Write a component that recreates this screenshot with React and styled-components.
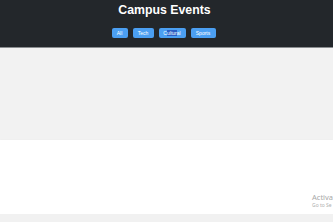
import React from "react";
import styled, { createGlobalStyle } from "styled-components";

const Global = createGlobalStyle`
  html, body { margin: 0; padding: 0; }
  body {
    background: #f1f1f1;
    font-family: "Liberation Sans", Arial, sans-serif;
    width: 333px;
    height: 222px;
    overflow: hidden;
  }
`;

const Page = styled.div`
  display: flex;
  flex-direction: column;
  height: 222px;
  position: relative;
  overflow: hidden;
`;

const Header = styled.header`
  background: #23272b;
  height: 47px;
  border-bottom: 1px solid #8a8d90;
  display: flex;
  flex-direction: column;
  align-items: center;
  box-sizing: content-box;
`;

const Title = styled.h1`
  margin: 3px 0 0 -4px;
  color: #ffffff;
  font-size: 12.3px;
  font-weight: bold;
  line-height: 15px;
`;

const Filters = styled.nav`
  display: flex;
  gap: 5px;
  margin-top: 10px;
  margin-left: -6px;
`;

const FilterButton = styled.button`
  background: #4b9ff2;
  color: #ffffff;
  border: none;
  border-radius: 2px;
  height: 10px;
  width: ${(p) => p.$w}px;
  padding: 0;
  font-family: "Liberation Sans", Arial, sans-serif;
  font-size: 5px;
  line-height: 10px;
  text-align: center;
  white-space: nowrap;
`;

const Selected = styled.span`
  background: #2a5fc4;
  color: #ffffff;
`;

const Hero = styled.section`
  background: #f2f2f2;
  height: 92px;
`;

const Content = styled.section`
  background: #ffffff;
  height: 74px;
  box-shadow: 0 1px 2px rgba(0, 0, 0, 0.12);
`;

const Footer = styled.div`
  flex: 1;
  background: #f1f1f1;
`;

const Watermark = styled.div`
  position: absolute;
  right: 0;
  top: 193px;
  width: 21px;
  color: #a8a8a8;
  white-space: nowrap;
  font-family: "Noto Sans", "Liberation Sans", sans-serif;
`;

const WmTitle = styled.div`
  font-size: 7.5px;
  line-height: 9px;
`;

const WmSub = styled.div`
  font-size: 5px;
  line-height: 6px;
  color: #b0b0b0;
`;

export default function App() {
  return (
    <>
      <Global />
      <Page>
        <Header>
          <Title>Campus Events</Title>
          <Filters>
            <FilterButton $w={16}>All</FilterButton>
            <FilterButton $w={21}>Tech</FilterButton>
            <FilterButton $w={27}>
              C<Selected>ultur</Selected>al
            </FilterButton>
            <FilterButton $w={25}>Sports</FilterButton>
          </Filters>
        </Header>
        <Hero />
        <Content />
        <Footer />
        <Watermark>
          <WmTitle>Activa</WmTitle>
          <WmSub>Go to Se</WmSub>
        </Watermark>
      </Page>
    </>
  );
}
